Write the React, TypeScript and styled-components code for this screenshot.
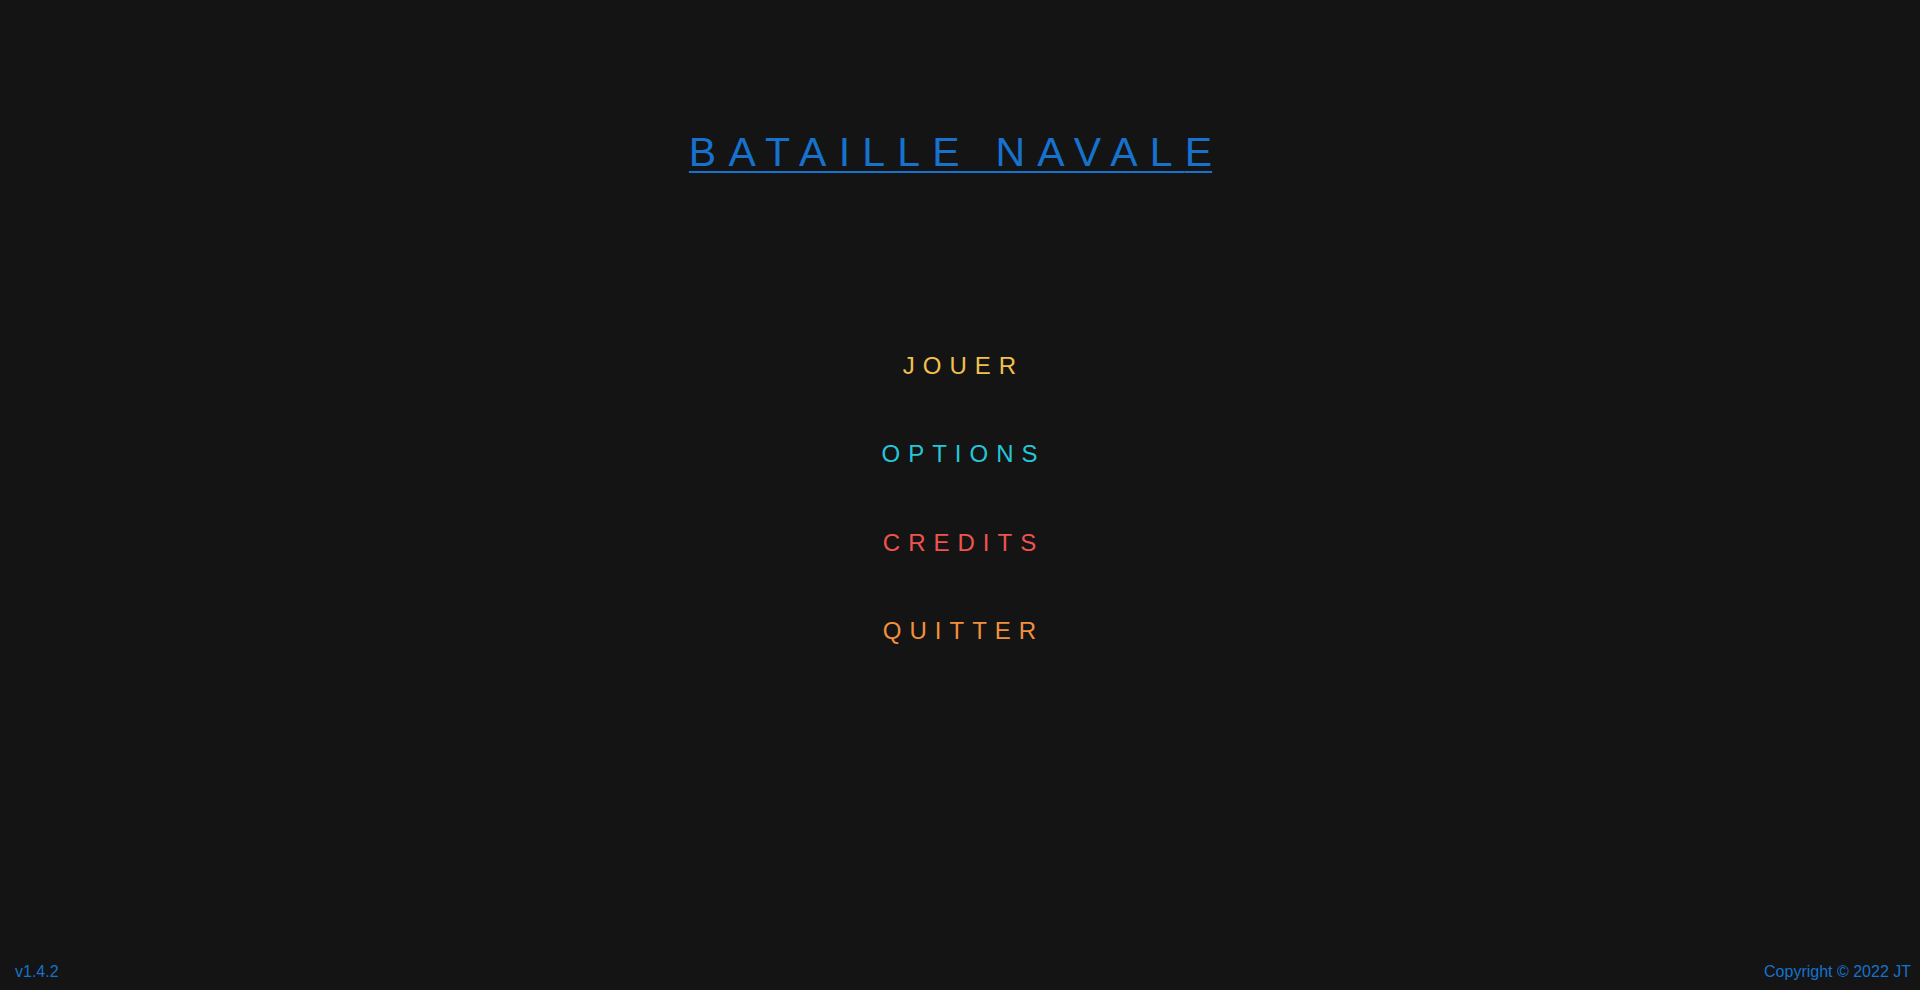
import React from "react";
import styled, { createGlobalStyle } from "styled-components";

const GlobalStyle = createGlobalStyle`
  html, body {
    margin: 0;
    padding: 0;
    background: #141414;
  }
  body {
    font-family: "Liberation Sans", Arial, sans-serif;
  }
`;

const Page = styled.div`
  min-height: 100vh;
  height: 990px;
  box-sizing: border-box;
  display: flex;
  flex-direction: column;
  align-items: center;
  background: #141414;
  font-family: "Liberation Sans", Arial, sans-serif;
`;

const Title = styled.h1`
  margin: 130px 19px 0 0;
  font-size: 41px;
  font-weight: 400;
  line-height: 45px;
  letter-spacing: 12.2px;
  color: #1672cc;
  text-decoration: underline;
  text-decoration-thickness: 2px;
  text-underline-offset: 5px;
  white-space: nowrap;
`;

const LastLetter = styled.span`
  letter-spacing: 0;
`;

const Menu = styled.nav`
  margin-top: 177px;
  display: flex;
  flex-direction: column;
  align-items: center;
  gap: 60.4px;
`;

const MenuItem = styled.button<{ $color: string }>`
  background: none;
  border: none;
  padding: 0 0 0 7px;
  margin: 0;
  cursor: pointer;
  font-family: "Liberation Sans", Arial, sans-serif;
  font-size: 24px;
  line-height: 28px;
  letter-spacing: 8px;
  color: ${(p) => p.$color};
`;

const Footer = styled.footer`
  margin-top: auto;
  align-self: stretch;
  display: flex;
  justify-content: space-between;
  align-items: flex-end;
  padding: 0 9px 9px 15px;
  font-size: 16px;
  line-height: 18px;
  color: #1672cc;
`;

const items = [
  { label: "JOUER", color: "#f2c14e" },
  { label: "OPTIONS", color: "#26c6da" },
  { label: "CREDITS", color: "#ef5350" },
  { label: "QUITTER", color: "#f2913d" },
];

export default function App() {
  return (
    <>
      <GlobalStyle />
      <Page>
        <Title>
          BATAILLE NAVAL<LastLetter>E</LastLetter>
        </Title>
        <Menu>
          {items.map((it) => (
            <MenuItem key={it.label} $color={it.color}>
              {it.label}
            </MenuItem>
          ))}
        </Menu>
        <Footer>
          <span>v1.4.2</span>
          <span>Copyright © 2022 JT</span>
        </Footer>
      </Page>
    </>
  );
}
